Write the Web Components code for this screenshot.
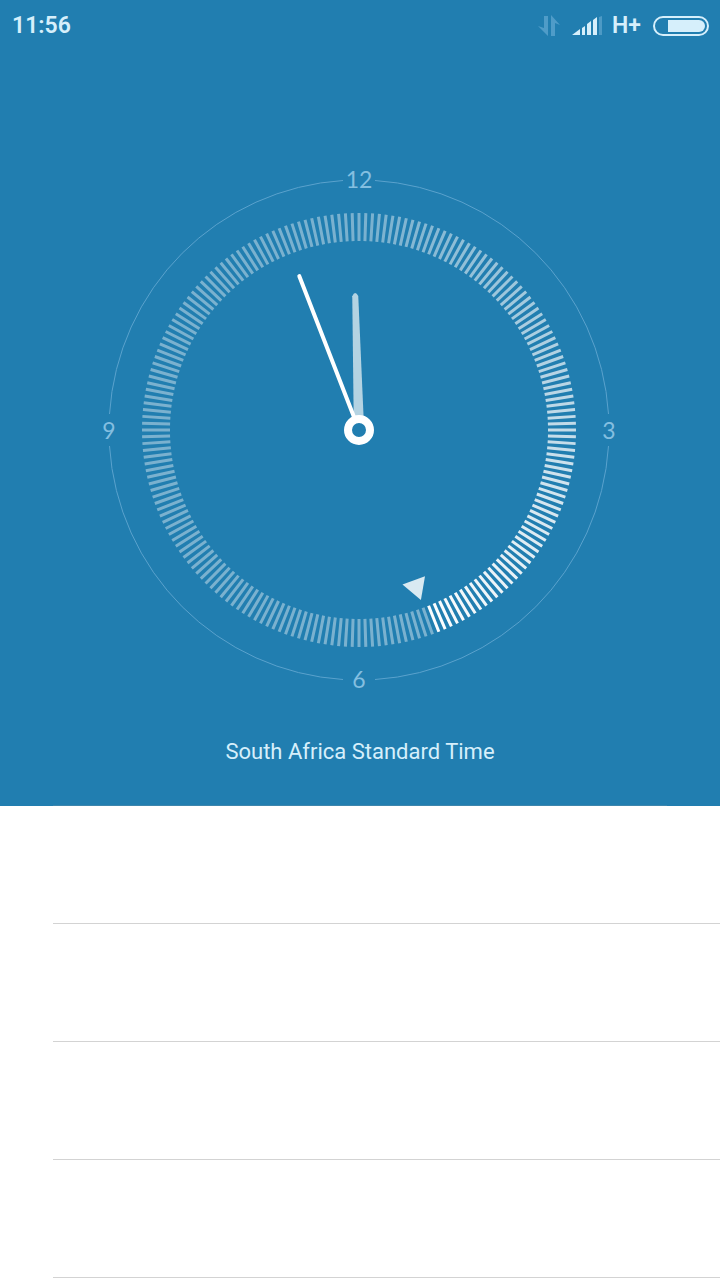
<!DOCTYPE html>
<html lang="en">
<head>
<meta charset="utf-8">
<meta name="viewport" content="width=device-width, initial-scale=1">
<title>Clock</title>
<style>
  body {
    margin: 0;
    background: #fff;
    font-family: Roboto, "Liberation Sans", sans-serif;
  }
</style>
</head>
<body>
<clock-screen>
  <status-bar slot="status" time="11:56" network="H+"></status-bar>
  <analog-clock hour="358.4" minute="338.8" second="160"></analog-clock>
  <span slot="zone">South Africa Standard Time</span>
</clock-screen>
<alarm-list rows="4"></alarm-list>

<script>
  // top bar: time on the left, signal and battery on the right
  class StatusBar extends HTMLElement {
    constructor() {
      super();
      this.attachShadow({ mode: 'open' });
      this.shadowRoot.innerHTML = `
        <style>
          :host {
            display: flex;
            align-items: center;
            justify-content: space-between;
            height: 52px;
            padding: 0 11px 0 12px;
            box-sizing: border-box;
            color: #d6effb;
            font-size: 23px;
            font-weight: 600;
            line-height: 26px;
          }
          .icons {
            display: flex;
            align-items: center;
            gap: 12px;
          }
          .signal { margin-right: -4px; }
          svg { display: block; }
        </style>
        <time>${this.getAttribute('time')}</time>
        <div class="icons">
          <svg width="22" height="22" viewBox="0 0 22 22" fill="#4f9cc8" aria-hidden="true">
            <path d="M6 1h4v20L0 11l6 2zM13 21V0l9 10-5-2v13z"/>
          </svg>
          <svg class="signal" width="32" height="20" viewBox="0 0 32 20" aria-hidden="true">
            <path fill="#d6effb" d="M0 19l8-6v6zM10 12l3-2v9h-3zM15 8l4-3v14h-4zM21 4l4-3v18h-4z"/>
            <path fill="#4d9ac5" d="M27 1l3-1v19h-3z"/>
          </svg>
          <span>${this.getAttribute('network')}</span>
          <svg width="56" height="20" viewBox="0 0 56 20" aria-hidden="true">
            <rect x="1" y="1" width="54" height="18" rx="9" fill="none" stroke="#d6effb" stroke-width="2"/>
            <path fill="#d6effb" d="M15 4h31a6 6 0 0 1 0 12H15z"/>
          </svg>
        </div>
      `;
    }
  }

  // dial with a ring of ticks; the attributes are angles clockwise from 12
  class AnalogClock extends HTMLElement {
    constructor() {
      super();
      this.attachShadow({ mode: 'open' });
      this.total = 200;
      this.shadowRoot.innerHTML = `
        <style>
          :host {
            display: block;
            width: 540px;
            max-width: 100%;
          }
          svg {
            display: block;
            width: 100%;
          }
          text {
            font-family: Lato, "Liberation Sans", sans-serif;
            font-size: 23px;
            text-anchor: middle;
            fill: #84bfe0;
          }
        </style>
        <svg viewBox="-269 -270 540 540" role="img" aria-label="Analog clock">
          <g fill="none" stroke="#5aa2cd" stroke-width="1">${this.arcs()}</g>
          <text x="0" y="-242">12</text>
          <text x="250" y="9">3</text>
          <text x="0" y="258">6</text>
          <text x="-250" y="9">9</text>
          <g stroke="#fff" stroke-width="3">${this.ticks()}</g>
          <path fill="#d9eaf2" d="M0 181l-12-21h24z" transform="rotate(${this.angle('second') - 180})"/>
          <path fill="#b4d3e2" d="M-5-10L-3-134Q0-140 3-134L5-10z" transform="rotate(${this.angle('hour')})"/>
          <path stroke="#fff" stroke-width="4" stroke-linecap="round" d="M0-12V-165" transform="rotate(${this.angle('minute')})"/>
          <circle r="11" fill="#217eb0" stroke="#fff" stroke-width="8"/>
        </svg>
      `;
    }

    angle(name) {
      return Number(this.getAttribute(name));
    }

    // four quarter arcs, open around the numbers
    arcs() {
      let out = '';
      for (let i = 0; i < 4; i++) {
        out += `<path d="M16-249.500A250 250 0 0 1 249.500-16" transform="rotate(${i * 90})"/>`;
      }
      return out;
    }

    // brightest right before the second mark, fading backwards
    ticks() {
      const step = 360 / this.total;
      let out = '';
      for (let i = 0; i < this.total; i++) {
        const behind = (this.angle('second') - i * step + 360) % 360;
        const opacity = Math.max(0.4, 1 - behind / 260).toFixed(2);
        out += `<path d="M0-189V-217" opacity="${opacity}" transform="rotate(${i * step})"/>`;
      }
      return out;
    }
  }

  class ClockScreen extends HTMLElement {
    constructor() {
      super();
      this.attachShadow({ mode: 'open' });
      this.shadowRoot.innerHTML = `
        <style>
          :host {
            display: block;
            background: #217eb0;
          }
          main {
            display: flex;
            flex-direction: column;
            align-items: center;
            gap: 37px;
            padding: 108px 0 38px;
          }
          .zone {
            color: #d6effb;
            font-size: 22px;
            line-height: 30px;
          }
          .edge {
            height: 1px;
            margin: 0 53px;
            background: #3d86ad;
          }
        </style>
        <slot name="status"></slot>
        <main>
          <slot></slot>
          <div class="zone"><slot name="zone"></slot></div>
        </main>
        <div class="edge"></div>
      `;
    }
  }

  // empty rows with inset dividers
  class AlarmList extends HTMLElement {
    constructor() {
      super();
      this.attachShadow({ mode: 'open' });
      const rows = Number(this.getAttribute('rows'));
      this.shadowRoot.innerHTML = `
        <style>
          :host { display: block; }
          ul {
            list-style: none;
            margin: 0;
            padding: 0 0 0 53px;
          }
          li {
            height: 118px;
            box-sizing: border-box;
            border-bottom: 1px solid #d3d3d3;
          }
        </style>
        <ul>${'<li></li>'.repeat(rows)}</ul>
      `;
    }
  }

  customElements.define('status-bar', StatusBar);
  customElements.define('analog-clock', AnalogClock);
  customElements.define('clock-screen', ClockScreen);
  customElements.define('alarm-list', AlarmList);
</script>
</body>
</html>
